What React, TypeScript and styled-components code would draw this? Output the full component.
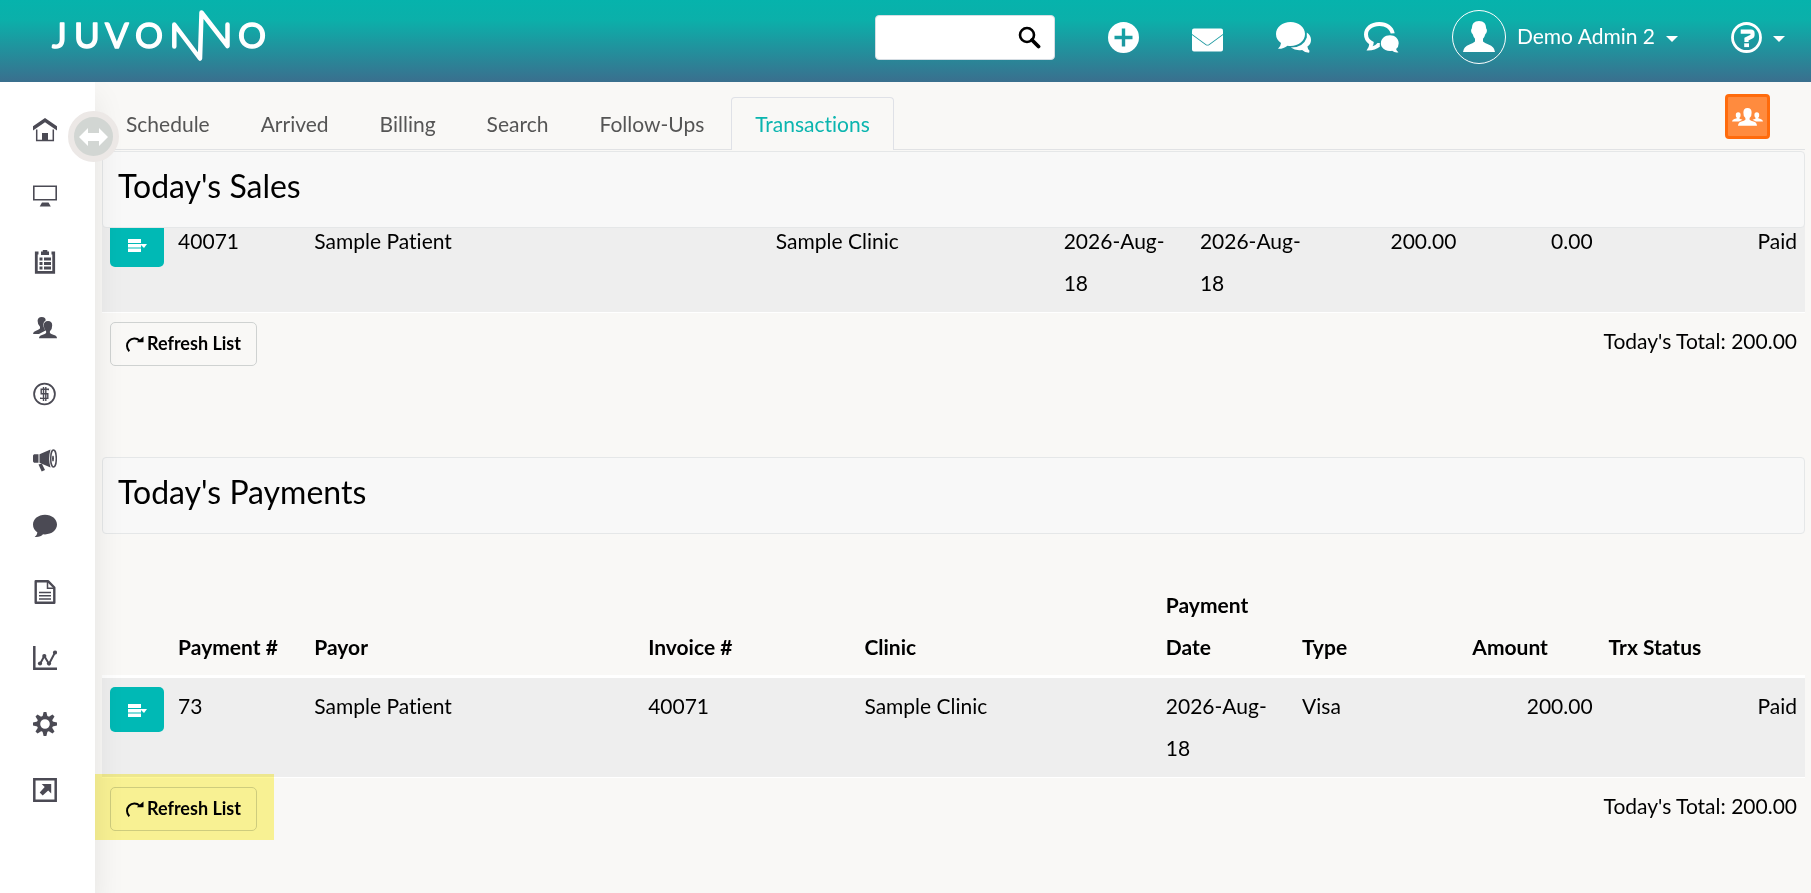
import React from "react";
import styled, { createGlobalStyle } from "styled-components";

const GlobalStyle = createGlobalStyle`
  *, *::before, *::after { box-sizing: border-box; }
  body {
    margin: 0;
    background: #f9f8f6;
    color: #000;
    font-family: Lato, "Liberation Sans", sans-serif;
    font-size: 21px;
    font-variant-ligatures: none;
    line-height: 42px;
  }
  button, input { font: inherit; color: inherit; }
  button { cursor: pointer; }
  svg { display: block; }
`;

const Page = styled.div`
  display: flex;
  flex-direction: column;
  min-height: 100vh;
  overflow-x: hidden;
`;

const Header = styled.header`
  position: relative;
  z-index: 3;
  display: flex;
  align-items: flex-start;
  justify-content: space-between;
  height: 82px;
  padding: 10px 26px 0 50px;
  color: #fff;
  background: linear-gradient(#06b3ac 0%, #0bb0aa 24%, #3a6f8e 100%);
`;

const LogoLink = styled.a`
  color: #fff;
`;

const HeaderTools = styled.div`
  display: flex;
  align-items: center;
  gap: 53px;
  height: 54px;
`;

const SearchBox = styled.form`
  display: flex;
  align-items: center;
  width: 180px;
  height: 45px;
  margin: 0;
  padding-right: 13px;
  border: 1px solid #d5dde3;
  border-radius: 4px;
  background: #fff;
  color: #000;
`;

const SearchInput = styled.input`
  flex: 1;
  min-width: 0;
  height: 100%;
  padding: 0 10px;
  border: 0;
  outline: 0;
  background: transparent;
`;

const IconButton = styled.button`
  display: flex;
  align-items: center;
  gap: 11px;
  padding: 0;
  border: 0;
  background: none;
  color: inherit;
  line-height: 30px;
  white-space: nowrap;
`;

const UserName = styled.span`
  padding-bottom: 2px;
`;

const Avatar = styled.span`
  display: flex;
  align-items: center;
  justify-content: center;
  width: 54px;
  height: 54px;
  border: 1px solid #fff;
  border-radius: 50%;
`;

const Caret = styled.span`
  margin-top: 4px;
  border: 6px solid transparent;
  border-top-color: #fff;
  border-bottom: 0;
`;

const Body = styled.div`
  display: flex;
  flex: 1;
`;

const Sidebar = styled.nav`
  position: relative;
  z-index: 2;
  flex: none;
  width: 95px;
  padding-top: 15px;
  background: #fff;
  color: #4b4a54;
  box-shadow: 0 16px 30px rgba(0, 0, 0, 0.09);
`;

const SideLink = styled.a`
  display: flex;
  align-items: center;
  height: 66px;
  padding-left: 33px;
  color: inherit;
`;

const Toggle = styled.button`
  position: absolute;
  top: 29px;
  right: -24px;
  display: flex;
  align-items: center;
  justify-content: center;
  width: 51px;
  height: 51px;
  padding: 0;
  border: 6px solid #ece8e6;
  border-radius: 50%;
  background: #d2d6d3;
  color: #fff;
`;

const Main = styled.main`
  flex: 1;
  min-width: 0;
  padding: 12px 6px 0 7px;
`;

const TabBar = styled.div`
  display: flex;
  align-items: flex-start;
  justify-content: space-between;
  height: 56px;
  padding-right: 35px;
  border-bottom: 1px solid #e1e2e4;
`;

const TabList = styled.div`
  display: flex;
  gap: 3px;
  padding-top: 3px;
`;

const Tab = styled.a<{ $active?: boolean }>`
  height: 53px;
  padding: 5px 23px 0;
  border: 1px solid ${(p) => (p.$active ? "#dfe1e7" : "transparent")};
  border-bottom: 0;
  border-radius: 4px 4px 0 0;
  background: ${(p) => (p.$active ? "#f9f8f6" : "transparent")};
  color: ${(p) => (p.$active ? "#0bb5af" : "#555")};
  text-decoration: none;
`;

const GroupButton = styled.button`
  display: flex;
  align-items: center;
  justify-content: center;
  width: 45px;
  height: 45px;
  padding: 0;
  border: 3px solid #ff6b0c;
  border-radius: 4px;
  background: #ff8b3e;
  color: #fff;
`;

const PanelHead = styled.div`
  position: relative;
  z-index: 1;
  height: 77px;
  margin-top: 1px;
  padding: 13px 15px;
  border: 1px solid #e5e7e8;
  border-radius: 4px;
  background: #f8f8f8;
`;

const PanelTitle = styled.h2`
  margin: 0;
  font-size: 32px;
  font-weight: 400;
  line-height: 42px;
`;

const SalesSection = styled.section`
  height: 305px;
`;

const ScrolledList = styled.div`
  margin-top: -15px;
`;

const PaymentList = styled.div`
  padding-top: 43px;
`;

const Table = styled.table`
  width: 100%;
  table-layout: fixed;
  border-collapse: separate;
  border-spacing: 0;
`;

const HeadCell = styled.th`
  padding: 7px 8px;
  border-bottom: 3px solid #fff;
  text-align: left;
  vertical-align: bottom;
  font-weight: 700;
`;

const Cell = styled.td<{ $right?: boolean }>`
  padding: 7px 8px 8px;
  border-bottom: 1px solid #fff;
  background: #eee;
  text-align: ${(p) => (p.$right ? "right" : "left")};
  vertical-align: top;
`;

const RowButton = styled.button`
  display: flex;
  align-items: center;
  justify-content: center;
  width: 54px;
  height: 45px;
  margin-top: 2px;
  padding: 2px 0 0;
  border: 0;
  border-radius: 5px;
  background: #00b9b5;
  color: #fff;
`;

const ListFooter = styled.div`
  position: relative;
  display: flex;
  align-items: flex-start;
  justify-content: space-between;
  padding: 7px 8px;
`;

const RefreshButton = styled.button`
  display: flex;
  align-items: center;
  gap: 3px;
  height: 44px;
  margin-top: 2px;
  padding: 0 15px 2px 14px;
  border: 1px solid #cfd2d1;
  border-radius: 5px;
  background: transparent;
  font-size: 18px;
  font-weight: 700;
  line-height: 40px;
`;

/* Marker that points the reader at the refresh button. */
const Highlight = styled.span`
  position: absolute;
  top: -4px;
  left: -7px;
  z-index: 3;
  width: 179px;
  height: 66px;
  background: #fef898;
  mix-blend-mode: multiply;
  pointer-events: none;
`;

function Logo() {
  return (
    <svg width="220" height="54" viewBox="50 10 220 54" role="img" aria-label="Juvonno">
      <g fill="#fff" stroke="#fff" strokeWidth="1.400" strokeLinejoin="round" fontFamily="Lato, sans-serif" fontSize="35">
        <text x="52" y="48">J</text>
        <text x="74" y="48">U</text>
        <text x="105" y="48">V</text>
        <text x="135" y="48">O</text>
        <text x="238" y="48">O</text>
      </g>
      <path
        d="M174.300 46.500V24.500L200 58.500L201.500 12.500L227.500 46V24.500"
        fill="none"
        stroke="#fff"
        strokeWidth="4.500"
        strokeLinecap="round"
        strokeLinejoin="round"
      />
    </svg>
  );
}

const SearchIcon = () => (
  <svg width="23" height="23" viewBox="0 0 23 23" fill="none" stroke="currentColor">
    <circle cx="9" cy="9" r="7" strokeWidth="2.600" />
    <path d="M14 14l6.500 6.500" strokeWidth="3.800" strokeLinecap="round" />
  </svg>
);

const PlusIcon = () => (
  <svg width="31" height="31" viewBox="0 0 31 31">
    <path
      fill="currentColor"
      fillRule="evenodd"
      d="M15.500 0a15.500 15.500 0 1 1 0 31a15.500 15.500 0 0 1 0-31zM13.800 6.500v7.300H6.500v3.400h7.300v7.300h3.400v-7.300h7.300v-3.400h-7.300V6.500z"
    />
  </svg>
);

const MailIcon = () => (
  <svg width="31" height="31" viewBox="0 0 31 31" fill="currentColor">
    <path d="M2 6.500h27q2 0 2 2v3.500L17 22.200q-1.500 1-3 0L0 12V8.500q0-2 2-2z" />
    <path d="M0 13l13.600 10q1.900 1.200 3.800 0L31 13v14.500q0 2-2 2H2q-2 0-2-2z" />
  </svg>
);

const CommentsIcon = () => (
  <svg width="35" height="31" viewBox="0 0 35 31" fill="currentColor">
    <path d="M14.500 0C22.700 0 29 5.300 29 12s-6.300 12-14.500 12q-1.500 0-3-.3Q7.700 27 2 26.800q2.800-2.500 3-5.800Q0 17.600 0 12C0 5.300 6.300 0 14.500 0z" />
    <path d="M30.800 10.500Q35 13.400 35 18q0 4-3.600 6.600.2 2.800 2.100 4.200l-.4 2q-4.300 0-7-2.800-6.600 1-11.300-2.400Q27.500 25.500 30.800 15.500z" />
  </svg>
);

const ConversationIcon = () => (
  <svg width="35" height="31" viewBox="0 0 35 31">
    <path
      fill="currentColor"
      d="M15.300 0C23.400 0 29.500 4.300 30.700 11.300l-4 .2C25.600 7 21.500 4 15.300 4 8.600 4 4 7.600 4 12.500q0 5 5.800 7.500-.2 3-1.300 4.300 3.300-1 5-3.300h2.300v3.800q-4.800 4-13.300 3.600 2.700-3 2.700-6.200Q0 18.500 0 12.500C0 5.300 6.500 0 15.300 0z"
    />
    <path
      fill="currentColor"
      d="M26 13.200c5 0 8.700 3.300 8.700 8q0 3.700-2.600 5.800.3 2 2.400 3.300-3.700.8-6.400-1.500-1 .3-2.100.3-5 0-8.300-4.300-1-1.600-.8-3.600c0-4.700 4-8 9.100-8z"
    />
  </svg>
);

const PersonIcon = () => (
  <svg width="32" height="32" viewBox="0 0 32 32" fill="currentColor">
    <path d="M16 0q7.300.2 7.300 7.800 1 .4.500 3-.5 1.800-1.400 2.200-.8 3-2.400 4.700v2.800q1.500 1.700 5.500 3 6 2 6.500 7.500H0q.5-5.500 6.500-7.500 4-1.300 5.500-3v-2.800Q10.400 16 9.600 13q-.9-.4-1.400-2.200-.5-2.600.5-3Q8.700.2 16 0z" />
  </svg>
);

const HelpIcon = () => (
  <svg width="31" height="31" viewBox="0 0 31 31" fill="none" stroke="currentColor">
    <circle cx="15.500" cy="15.500" r="14" strokeWidth="2.800" />
    <path d="M9.700 9.700H20q1.500 0 1.500 1.500v2q0 1-1 1.500l-5 2.400v3" strokeWidth="4.200" />
    <path d="M13.200 23.200h4.800" strokeWidth="3.800" />
  </svg>
);

const ArrowsIcon = () => (
  <svg width="29" height="18" viewBox="0 0 29 18">
    <path fill="currentColor" d="M0 9L9 0v5h11V0l9 9-9 9v-5H9v5z" />
  </svg>
);

const GroupIcon = () => (
  <svg width="31" height="18" viewBox="0 0 31 18" fill="currentColor">
    <path d="M15.500 0q4.300 0 4.100 4.800.2 3.600-2 5.200v1.700q1 .9 4 1.800 3.200.9 3.400 4.200H6q.2-3.300 3.400-4.200 3-.9 4-1.800V10q-2.200-1.600-2-5.200Q11.200 0 15.500 0z" />
    <path d="M6.200 4.300q2.600 0 2.400 3Q8.600 9 7.500 9.800v.9l3 1-3.500 1.800H0q.2-2 2.300-2.500l2.500-.8v-.5Q3.700 9 3.800 7.300q-.2-3 2.400-3z" />
    <path d="M24.800 4.300q-2.600 0-2.400 3 0 1.700 1.100 2.500v.9l-3 1 3.500 1.800h7q-.2-2-2.300-2.500l-2.500-.8v-.5q1.100-.7 1-2.400.2-3-2.400-3z" />
  </svg>
);

const ListIcon = () => (
  <svg width="19" height="13" viewBox="0 0 19 13" fill="currentColor">
    <path d="M0 0h13v4H0zM0 5h19l-3 4-3-3v2.500H0zM0 9.500h13V13H0z" />
  </svg>
);

const RefreshIcon = () => (
  <svg width="19" height="17" viewBox="0 0 19 17">
    <path d="M4.300 16.300A7.200 7.200 0 1 1 14.600 5.600" fill="none" stroke="currentColor" strokeWidth="2" />
    <path d="M18.500 1.500v5.700h-6.700z" fill="currentColor" />
  </svg>
);

const sideIcons: { label: string; art: React.ReactNode }[] = [
  {
    label: "Home",
    art: (
      <>
        <path d="M12 0l12 8.300v4.200L12 4.300 0 12.500V8.300z" />
        <path d="M3.700 11.500v11h16.600v-11" fill="none" stroke="currentColor" strokeWidth="1.500" />
        <path d="M9 15h6v8H9z" />
      </>
    ),
  },
  {
    label: "Desktop",
    art: (
      <>
        <path d="M.8 2.200h22.400v13.600H.8z" fill="none" stroke="currentColor" strokeWidth="1.600" />
        <path d="M9 18.500h6.500l2.300 4H6.700z" />
      </>
    ),
  },
  {
    label: "Tasks",
    art: (
      <>
        <path d="M5.500 3H3.300v19.300h17.400V3h-2.200" fill="none" stroke="currentColor" strokeWidth="2.800" />
        <path d="M8 1.500h1.800V0h4.500v1.500H16V5H8z" />
        <path d="M6.500 7.500h3v3h-3zM11 7.500h7v3h-7zM6.500 12h3v3h-3zM11 12h7v3h-7zM6.500 16.500h3v3h-3zM11 16.500h7v3h-7z" />
      </>
    ),
  },
  {
    label: "Patients",
    art: (
      <>
        <path d="M8.700 1Q13 1 12.600 4.500q-2.800 1.700-2 6 .6 3.300 2 4L6 18H0q0-2.300 3-3.300 4-1.400 4-2.400v-1.500Q4.500 8.500 4.600 4.800 4.700 1 8.700 1z" />
        <path d="M15 5q4.300 0 4.200 4.500 0 4-2.300 5.700v1.700q.8 1 4.100 2 3 .8 3 3.400H6q0-2.600 3-3.400 3.300-1 4.100-2v-1.700q-2.300-1.700-2.300-5.700Q10.700 5 15 5z" />
      </>
    ),
  },
  {
    label: "Billing",
    art: (
      <>
        <circle cx="11.500" cy="12" r="10.400" fill="none" stroke="currentColor" strokeWidth="1.800" />
        <path
          d="M15.300 8.300v-1H8.200v4.500h6.600v4.600H7.700v-1M10.500 5v14M12.800 5v14"
          fill="none"
          stroke="currentColor"
          strokeWidth="1.400"
        />
      </>
    ),
  },
  {
    label: "Marketing",
    art: (
      <>
        <path d="M0 7.500l1-1.300h4.500v8.600H1l-1-1.300zM6.500 6.200L17.500 1.500q-2.600 9 0 18L6.500 14.800z" />
        <ellipse cx="20.500" cy="10.500" rx="2.800" ry="8.500" fill="none" stroke="currentColor" strokeWidth="1.500" />
        <ellipse cx="20" cy="10.500" rx="1" ry="3" />
        <path d="M5.500 16.500l3.300-1L12 22l-3.300 1.500z" />
      </>
    ),
  },
  {
    label: "Messages",
    art: (
      <path d="M12 .8c6.800 0 12 4.300 12 9.800s-5.200 9.800-12 9.800l-2-.1Q7.500 23.500 1.700 23q2.400-1.700 2.700-4.500Q0 15.500 0 10.600C0 5.100 5.200.8 12 .8z" />
    ),
  },
  {
    label: "Documents",
    art: (
      <>
        <path
          d="M2.700 1.200H15l6.300 6.300v15.200H2.700z"
          fill="none"
          stroke="currentColor"
          strokeWidth="2.400"
          strokeLinejoin="round"
        />
        <path d="M14.500 2v6.300H21M6 12.500h12M6 15.700h12M6 18.900h12" fill="none" stroke="currentColor" strokeWidth="1.500" />
      </>
    ),
  },
  {
    label: "Reports",
    art: (
      <>
        <path d="M1.300 0v22.800H24" fill="none" stroke="currentColor" strokeWidth="2.500" />
        <path d="M7 18l4.300-8 4.700 8 6-11.500" fill="none" stroke="currentColor" strokeWidth="2" />
        <circle cx="7" cy="17.500" r="2.100" />
        <circle cx="11.300" cy="10" r="2.100" />
        <circle cx="16" cy="17.500" r="2.100" />
        <circle cx="22" cy="6.500" r="2.100" />
      </>
    ),
  },
  {
    label: "Settings",
    art: (
      <>
        <circle cx="12" cy="12" r="6.500" fill="none" stroke="currentColor" strokeWidth="3.400" />
        {[0, 45, 90, 135, 180, 225, 270, 315].map((angle) => (
          <path key={angle} d="M9.300 5.500L10.600 0h2.800l1.300 5.500z" transform={`rotate(${angle} 12 12)`} />
        ))}
      </>
    ),
  },
  {
    label: "Open",
    art: (
      <>
        <path d="M1.300 1.300h21.400v21.400H1.300z" fill="none" stroke="currentColor" strokeWidth="2.500" />
        <path d="M8.700 6h9.500v9.500l-3-3-5.500 5-3-3 5-5.500z" />
      </>
    ),
  },
];

const tabs = ["Schedule", "Arrived", "Billing", "Search", "Follow-Ups", "Transactions"];

const saleColumns = ["4%", "8%", "27.1%", "16.9%", "8%", "8%", "8%", "8%", "12%"];
const paymentColumns = ["4%", "8%", "19.6%", "12.7%", "17.7%", "8%", "10%", "8%", "12%"];
const paymentHeads = ["Payment #", "Payor", "Invoice #", "Clinic", "Payment Date", "Type", "Amount", "Trx Status"];

function Columns({ widths }: { widths: string[] }) {
  return (
    <colgroup>
      {widths.map((width, i) => (
        <col key={i} width={width} />
      ))}
    </colgroup>
  );
}

function ActionCell() {
  return (
    <Cell>
      <RowButton type="button" aria-label="Row actions">
        <ListIcon />
      </RowButton>
    </Cell>
  );
}

function Footer({ highlighted }: { highlighted?: boolean }) {
  return (
    <ListFooter>
      <RefreshButton type="button">
        <RefreshIcon />
        Refresh List
      </RefreshButton>
      <span>Today's Total: 200.00</span>
      {highlighted && <Highlight />}
    </ListFooter>
  );
}

export default function App() {
  return (
    <Page>
      <GlobalStyle />
      <Header>
        <LogoLink href="#">
          <Logo />
        </LogoLink>
        <HeaderTools>
          <SearchBox role="search">
            <SearchInput type="text" aria-label="Search" />
            <IconButton type="button" aria-label="Run search">
              <SearchIcon />
            </IconButton>
          </SearchBox>
          <IconButton type="button" aria-label="Add">
            <PlusIcon />
          </IconButton>
          <IconButton type="button" aria-label="Mail">
            <MailIcon />
          </IconButton>
          <IconButton type="button" aria-label="Comments">
            <CommentsIcon />
          </IconButton>
          <IconButton type="button" aria-label="Conversations">
            <ConversationIcon />
          </IconButton>
          <IconButton type="button">
            <Avatar>
              <PersonIcon />
            </Avatar>
            <UserName>Demo Admin 2</UserName>
            <Caret />
          </IconButton>
          <IconButton type="button" aria-label="Help">
            <HelpIcon />
            <Caret />
          </IconButton>
        </HeaderTools>
      </Header>
      <Body>
        <Sidebar aria-label="Main">
          {sideIcons.map(({ label, art }) => (
            <SideLink key={label} href="#" aria-label={label}>
              <svg width="24" height="24" viewBox="0 0 24 24" fill="currentColor">
                {art}
              </svg>
            </SideLink>
          ))}
          <Toggle type="button" aria-label="Toggle sidebar">
            <ArrowsIcon />
          </Toggle>
        </Sidebar>
        <Main>
          <TabBar>
            <TabList>
              {tabs.map((tab) => (
                <Tab key={tab} href="#" $active={tab === "Transactions"}>
                  {tab}
                </Tab>
              ))}
            </TabList>
            <GroupButton type="button" aria-label="Group">
              <GroupIcon />
            </GroupButton>
          </TabBar>
          <SalesSection>
            <PanelHead>
              <PanelTitle>Today's Sales</PanelTitle>
            </PanelHead>
            <ScrolledList>
              <Table>
                <Columns widths={saleColumns} />
                <tbody>
                  <tr>
                    <ActionCell />
                    <Cell>40071</Cell>
                    <Cell>Sample Patient</Cell>
                    <Cell>Sample Clinic</Cell>
                    <Cell>2026-Aug-18</Cell>
                    <Cell>2026-Aug-18</Cell>
                    <Cell $right>200.00</Cell>
                    <Cell $right>0.00</Cell>
                    <Cell $right>Paid</Cell>
                  </tr>
                </tbody>
              </Table>
              <Footer />
            </ScrolledList>
          </SalesSection>
          <section>
            <PanelHead>
              <PanelTitle>Today's Payments</PanelTitle>
            </PanelHead>
            <PaymentList>
              <Table>
                <Columns widths={paymentColumns} />
                <thead>
                  <tr>
                    <HeadCell as="td" />
                    {paymentHeads.map((head) => (
                      <HeadCell key={head} scope="col">
                        {head}
                      </HeadCell>
                    ))}
                  </tr>
                </thead>
                <tbody>
                  <tr>
                    <ActionCell />
                    <Cell>73</Cell>
                    <Cell>Sample Patient</Cell>
                    <Cell>40071</Cell>
                    <Cell>Sample Clinic</Cell>
                    <Cell>2026-Aug-18</Cell>
                    <Cell>Visa</Cell>
                    <Cell $right>200.00</Cell>
                    <Cell $right>Paid</Cell>
                  </tr>
                </tbody>
              </Table>
              <Footer highlighted />
            </PaymentList>
          </section>
        </Main>
      </Body>
    </Page>
  );
}
